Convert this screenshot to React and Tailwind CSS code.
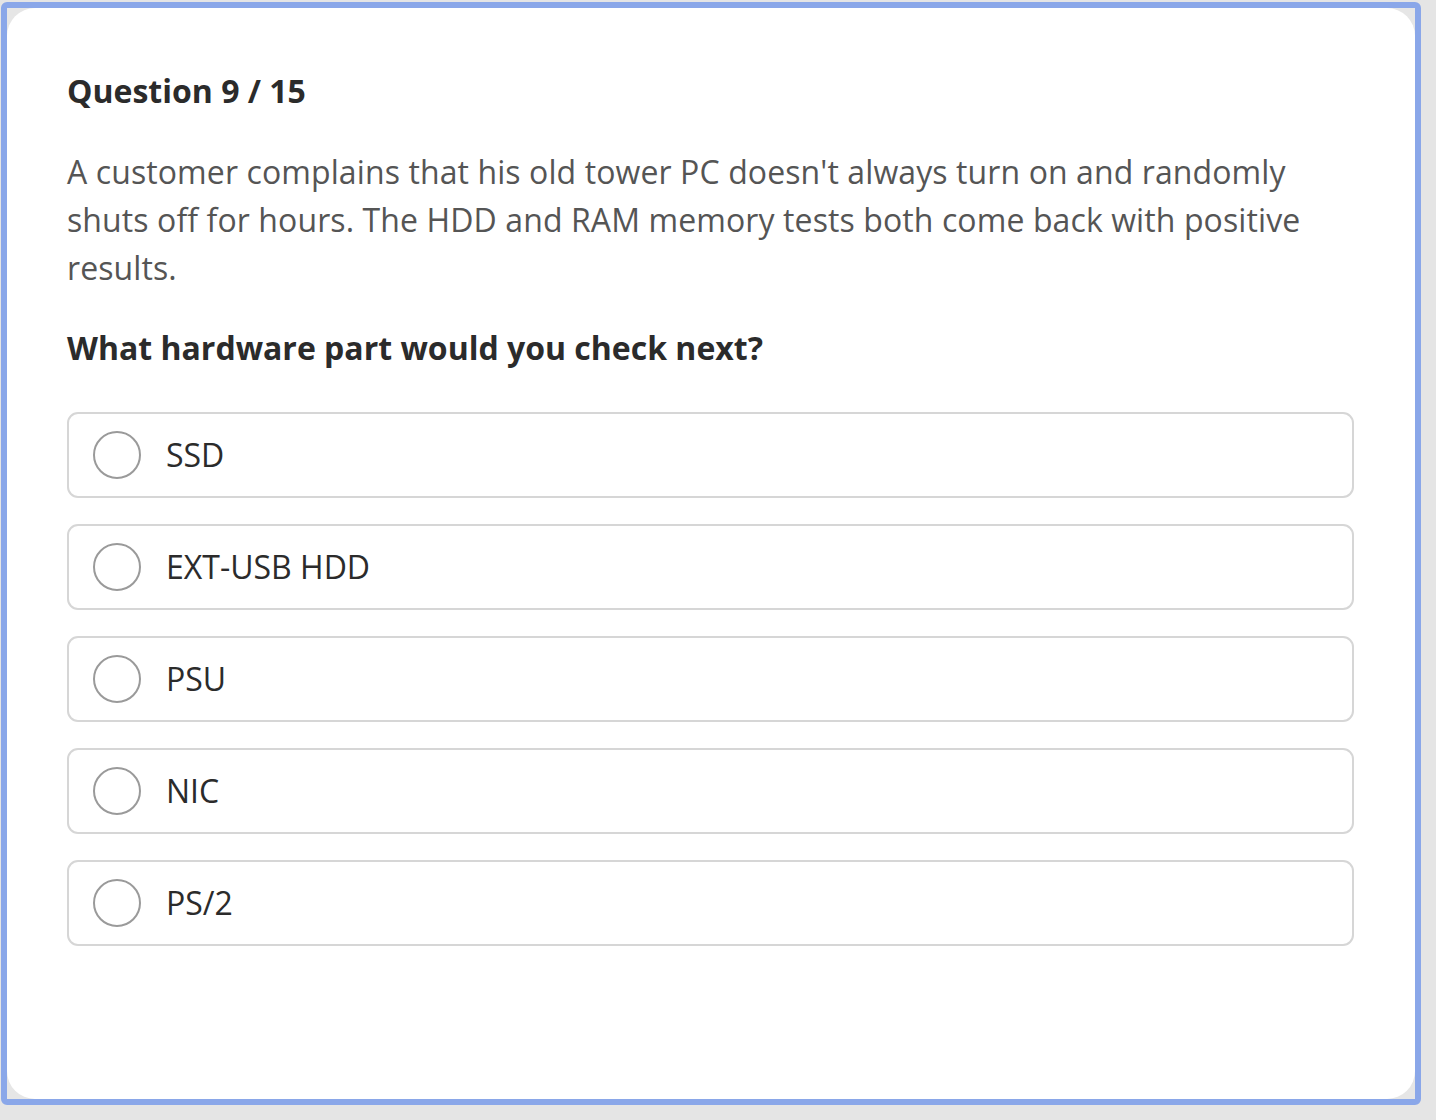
import React from "react";

const options = ["SSD", "EXT-USB HDD", "PSU", "NIC", "PS/2"];

export default function App() {
  return (
    <div className="w-[1436px] h-[1120px] bg-[#e5e5e5] pt-[2px] pl-[1px]" style={{ fontFamily: '"Open Sans", "Noto Sans", sans-serif' }}>
      <div className="w-[1420px] h-[1103px] border-[6px] border-[#8aa7e9] rounded-[6px] bg-[#e6e6e6]">
        <div className="w-full h-full bg-white rounded-[28px] pt-[59px] pl-[60px] pr-[60px]">
          <h1 className="text-[32px] leading-[48px] font-bold text-[#2b2b2b]">Question 9 / 15</h1>
          <p className="mt-[33px] text-[32px] leading-[48px] text-[#555555] tracking-[0.1px]">
            A customer complains that his old tower PC doesn't always turn on and randomly shuts off for hours. The HDD and RAM memory tests both come back with positive results.
          </p>
          <h2 className="mt-[32px] text-[32px] leading-[48px] font-bold text-[#2b2b2b]">What hardware part would you check next?</h2>
          <div className="mt-[40px] flex flex-col gap-[26px] w-[1287px]">
            {options.map((o) => (
              <div key={o} className="h-[86px] border-2 border-[#d6d6d6] rounded-[11px] flex items-center pl-[24px]">
                <div className="w-[48px] h-[48px] rounded-full border-2 border-[#9a9a9a] shrink-0" />
                <span className="ml-[25px] text-[32px] leading-[48px] text-[#2b2b2b]">{o}</span>
              </div>
            ))}
          </div>
        </div>
      </div>
    </div>
  );
}
